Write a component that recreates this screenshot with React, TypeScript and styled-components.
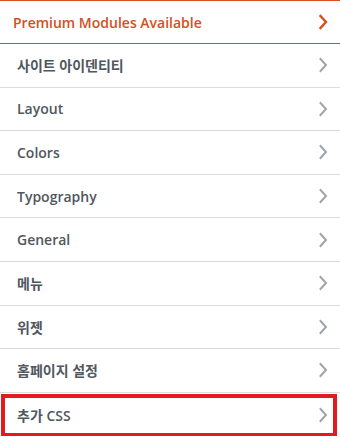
import styled, { createGlobalStyle } from "styled-components"

const GlobalStyle = createGlobalStyle`
    html, body {
        margin: 0;
        padding: 0;
        background: #fff;
    }
    body {
        font-family: "Open Sans", "Noto Sans CJK KR", sans-serif;
    }
`

const Panel = styled.ul`
    list-style: none;
    margin: 0;
    padding: 0;
    width: 340px;
    background: #fff;
`

const PremiumRow = styled.li`
    display: flex;
    align-items: center;
    justify-content: space-between;
    height: 42px;
    padding: 0 12px 0 13px;
    border-top: 1px solid #d54e21;
    border-bottom: 1px solid #d54e21;
    color: #d54e21;
    font-size: 14px;
    font-weight: 600;
`

const Row = styled.li<{ $highlighted?: boolean }>`
    position: relative;
    display: flex;
    align-items: center;
    justify-content: space-between;
    height: 43.6px;
    box-sizing: border-box;
    padding: 0 12px 0 17px;
    border-bottom: 1px solid #dcdcde;
    color: #50575e;
    font-size: 14px;
    font-weight: 600;

    ${p => p.$highlighted && `
        border-bottom: none;
        &::after {
            content: "";
            position: absolute;
            left: 1px;
            right: 3px;
            top: 1px;
            bottom: -1px;
            border: 4px solid #e31b1f;
            pointer-events: none;
        }
    `}
`

const Chevron = ({ color, width }: { color: string; width: number }) => (
    <svg width="10" height="16" viewBox="0 0 10 16" fill="none">
        <polyline points="2.5,2 8,8 2.5,14" stroke={color} strokeWidth={width} strokeLinecap="square" />
    </svg>
)

const items = ["사이트 아이덴티티", "Layout", "Colors", "Typography", "General", "메뉴", "위젯", "홈페이지 설정", "추가 CSS"]

export default function App() {
    return (
        <>
            <GlobalStyle />
            <Panel>
                <PremiumRow>
                    <span>Premium Modules Available</span>
                    <Chevron color="#d54e21" width={2.4} />
                </PremiumRow>
                {items.map((label, i) => (
                    <Row key={label} $highlighted={i === items.length - 1}>
                        <span>{label}</span>
                        <Chevron color="#a0a5aa" width={2} />
                    </Row>
                ))}
            </Panel>
        </>
    )
}
